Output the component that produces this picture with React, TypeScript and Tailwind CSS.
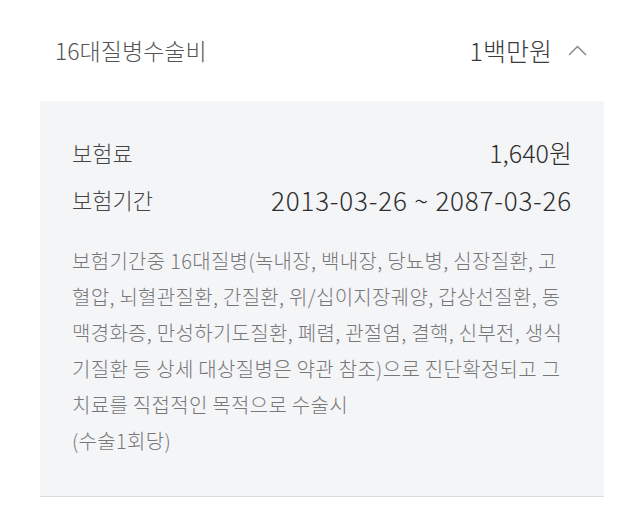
const descLines = [
  "보험기간중 16대질병(녹내장, 백내장, 당뇨병, 심장질환, 고",
  "혈압, 뇌혈관질환, 간질환, 위/십이지장궤양, 갑상선질환, 동",
  "맥경화증, 만성하기도질환, 폐렴, 관절염, 결핵, 신부전, 생식",
  "기질환 등 상세 대상질병은 약관 참조)으로 진단확정되고 그",
  "치료를 직접적인 목적으로 수술시",
  "(수술1회당)",
];

export default function App() {
  return (
    <div
      className="h-[506px] w-[644px] bg-white"
      style={{ fontFamily: '"Noto Sans CJK KR", "Noto Sans", sans-serif' }}
    >
      <div className="flex h-[101px] items-center justify-between pl-[55px] pr-[57px]">
        <span className="text-[23px] font-light text-[#555]">16대질병수술비</span>
        <div className="flex items-center gap-[16px]">
          <span className="text-[25px] font-light text-[#3a3a3a]">1백만원</span>
          <svg width="19" height="11" viewBox="0 0 19 11" fill="none">
            <path d="M1 10 L9.5 1.5 L18 10" stroke="#8a8a8a" strokeWidth="1.5" />
          </svg>
        </div>
      </div>
      <div className="mx-[40px] border-b border-[#dcdcdc] bg-[#f4f5f7] px-[32px] pb-[37px] pt-[28px]">
        <div className="flex h-[47px] items-center justify-between">
          <span className="text-[22px] font-light text-[#444]">보험료</span>
          <span className="text-[25px] font-light text-[#2e2e2e]">1,640원</span>
        </div>
        <div className="flex h-[47px] items-center justify-between">
          <span className="text-[22px] font-light text-[#444]">보험기간</span>
          <span className="text-[26px] font-light tracking-[0.8px] text-[#2e2e2e]">
            2013-03-26 ~ 2087-03-26
          </span>
        </div>
        <div className="mt-[20px] text-[20px] font-light leading-[36px] tracking-[0.3px] text-[#777]">
          {descLines.map((line) => (
            <div key={line} className="whitespace-nowrap">
              {line}
            </div>
          ))}
        </div>
      </div>
    </div>
  );
}
